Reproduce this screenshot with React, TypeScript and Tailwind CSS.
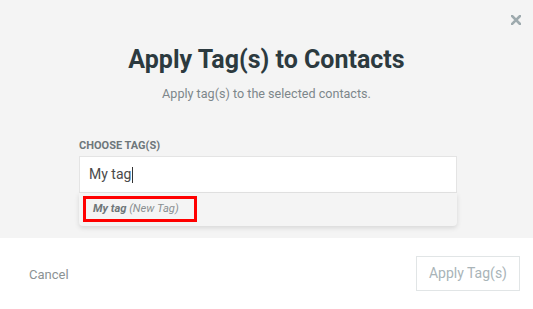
export default function App() {
  return (
    <div className="flex h-[309px] w-[533px] flex-col font-['Roboto',sans-serif]">
      <section className="relative flex h-[238px] flex-col bg-[#f4f4f4] pt-[45px]">
        <button className="absolute right-[12px] top-[15px] text-[#9eaaae]" aria-label="Close">
          <svg width="10" height="10" viewBox="0 0 10 10">
            <path d="M1 1L9 9M9 1L1 9" stroke="currentColor" strokeWidth="2.6" strokeLinecap="square" />
          </svg>
        </button>
        <h1 className="text-center text-[25px] font-bold leading-[30px] text-[#2c3a3f]">
          Apply Tag(s) to Contacts
        </h1>
        <p className="mt-[11px] text-center text-[12.6px] leading-[16px] text-[#7d878b]">
          Apply tag(s) to the selected contacts.
        </p>
        <div className="mt-[37px] flex flex-col pl-[79px] pr-[76px]">
          <label className="text-[11px] font-bold leading-[13px] text-[#6e777b]">CHOOSE TAG(S)</label>
          <div className="mt-[4px] flex h-[37px] items-center border border-[#e4e4e4] bg-white px-[9px] text-[14px] text-[#4a4a4a]">
            My tag
            <span className="ml-[1px] h-[16px] w-[1px] bg-[#333]" />
          </div>
          <div className="rounded-b-[4px] bg-[#f4f4f4] px-[4px] pb-[4px] pt-[3px] shadow-[0_2px_5px_rgba(0,0,0,0.12)]">
            <div className="w-[114px] border-[3px] border-[#ff0000] pl-[7px] text-[11.2px] italic leading-[20px] text-[#8a8f91]">
              <span className="font-bold text-[#6f7679]">My tag</span> (New Tag)
            </div>
          </div>
        </div>
      </section>
      <footer className="flex flex-1 items-center justify-between bg-white pl-[29px] pr-[13px]">
        <button className="pt-[2px] text-[13px] text-[#8c9294]">Cancel</button>
        <button className="h-[35px] border border-[#e1e5e6] px-[12px] text-[14px] text-[#a9b4b8]">
          Apply Tag(s)
        </button>
      </footer>
    </div>
  )
}
